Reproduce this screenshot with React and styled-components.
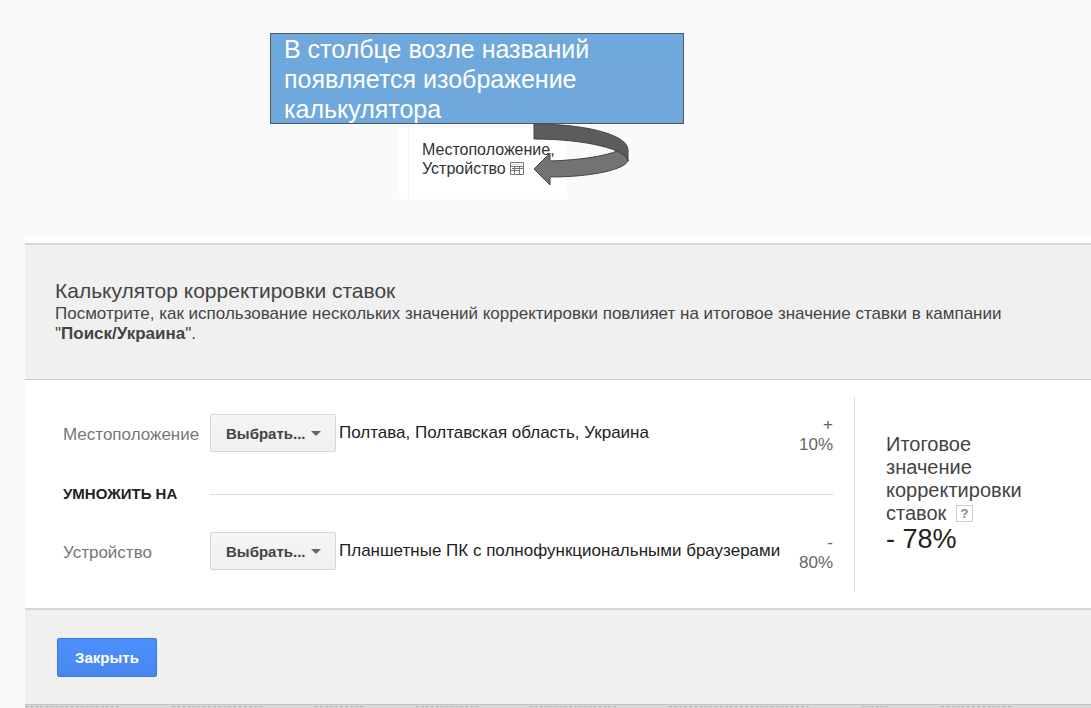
import React from "react";
import styled, { createGlobalStyle } from "styled-components";

const GlobalStyle = createGlobalStyle`
  *, *::before, *::after { box-sizing: border-box; }
  body {
    margin: 0;
    background: #fafafa;
    color: #444;
    font-family: "Liberation Sans", Arial, sans-serif;
    font-size: 17px;
    line-height: 20px;
  }
  h1, h2, p { margin: 0; font-weight: 400; }
`;

const Page = styled.div`
  min-height: 100vh;
  display: flex;
  flex-direction: column;
  overflow: hidden;
`;

const Intro = styled.header`
  display: flex;
  flex-direction: column;
  align-items: flex-start;
  padding: 33px 0 36px 270px;
`;

const Callout = styled.h1`
  width: 414px;
  max-width: 100%;
  height: 91px;
  padding: 0 13px;
  border: 1px solid #505a64;
  background: #6fa8dc;
  color: #fff;
  font-size: 25px;
  line-height: 30px;
`;

const Sample = styled.div`
  position: relative;
  margin: 4px 0 0 129px;
  width: 168px;
  padding-left: 9px;
  background: #fff;
`;

const SampleCell = styled.p`
  height: 71px;
  padding: 12px 0 0 13px;
  border-left: 1px solid #f2f2f2;
  color: #333;
  font-size: 16px;
  line-height: 19px;
  white-space: nowrap;
  svg { vertical-align: -1px; }
`;

const Arrow = styled.svg`
  position: absolute;
  top: -5px;
  left: 134px;
`;

const Panel = styled.main`
  flex: 1;
  display: flex;
  flex-direction: column;
  margin-left: 25px;
  border-top: 8px solid #fdfdfd;
  background: #f0f0f0;
`;

const PanelHead = styled.section`
  padding: 33px 30px 35px;
  border-top: 2px solid #d6d6d6;
  border-bottom: 1px solid #ccc;
  h2 { font-size: 21px; line-height: 26px; }
`;

const PanelBody = styled.section`
  display: flex;
  padding: 17px 0 16px 38px;
  background: #fff;
`;

const Factors = styled.div`
  flex: 0 1 792px;
  display: flex;
  flex-direction: column;
  gap: 28px;
  padding: 17px 21px 22px 0;
  border-right: 1px solid #d9d9d9;
`;

const Row = styled.div`
  display: grid;
  grid-template-columns: 147px 126px minmax(0, 1fr) auto;
  grid-template-rows: 38px;
  align-items: center;
`;

const Label = styled.label`
  padding-top: 4px;
  color: #777;
`;

const Picker = styled.span`
  position: relative;
  display: block;
  svg { position: absolute; right: 15px; top: 17px; pointer-events: none; }
`;

const Select = styled.select`
  appearance: none;
  display: block;
  width: 100%;
  height: 38px;
  padding: 0 15px;
  border: 1px solid #d6d6d6;
  border-radius: 2px;
  background: linear-gradient(#f5f5f5, #f0f0f0);
  color: #444;
  font: bold 15px "Liberation Sans", Arial, sans-serif;
`;

const Value = styled.span`
  padding-left: 3px;
  color: #222;
  white-space: nowrap;
`;

const Percent = styled.span`
  padding-top: 4px;
  color: #666;
  text-align: right;
`;

const Multiply = styled.div`
  display: grid;
  grid-template-columns: 147px 1fr;
  align-items: center;
  height: 24px;
  padding-top: 4px;
  color: #222;
  font-size: 15px;
  font-weight: 700;
  &::after { content: ""; border-top: 1px solid #d9d9d9; }
`;

const Result = styled.div`
  flex: 1;
  padding: 36px 30px 0 31px;
  font-size: 20px;
  line-height: 23px;
  p { width: 140px; }
`;

const Total = styled.output`
  display: block;
  color: #222;
  font-size: 27px;
  line-height: 28px;
`;

const Help = styled.button`
  width: 17px;
  height: 17px;
  margin-left: 4px;
  padding: 0;
  border: 1px solid #ccc;
  background: #fff;
  color: #888;
  font: bold 13px/15px "Liberation Sans", Arial, sans-serif;
  vertical-align: 2px;
`;

const PanelFoot = styled.section`
  flex: 1;
  padding: 28px 32px 27px;
  border-top: 2px solid #d6d6d6;
`;

const Close = styled.button`
  display: block;
  width: 100px;
  height: 39px;
  border: 1px solid #3b78e0;
  border-radius: 2px;
  background: linear-gradient(#4d90fe, #4787ed);
  color: #fff;
  font: bold 15px "Liberation Sans", Arial, sans-serif;
`;

const CutRow = styled.div`
  display: flex;
  justify-content: space-between;
  height: 4px;
  padding: 1px 80px 0 0;
  border-top: 1px solid #c4c4c4;
  background: #d9d9d9;
`;

const CutCell = styled.span`
  width: ${(p) => p.$width}px;
  border-top: 1px dashed #b4b4b4;
`;

const Caret = () => (
  <svg width="10" height="5" viewBox="0 0 10 5" aria-hidden="true">
    <path d="M0 0h10L5 5z" fill="#666" />
  </svg>
);

const CalculatorIcon = () => (
  <svg width="14" height="13" viewBox="0 0 14 13" aria-hidden="true">
    <path
      d="M.5.5h13v12H.5zM.5 4.500h13M.5 8.500h9M4.500 4.500v8M9.500 4.500v8M2 6.500h11M2 2.500h10"
      fill="none"
      stroke="#777"
    />
    <path d="M2 2h10v1H2z" fill="#ddd" />
  </svg>
);

const factors = [
  { id: "place", label: "Местоположение", value: "Полтава, Полтавская область, Украина", sign: "+", amount: "10%" },
  { id: "device", label: "Устройство", value: "Планшетные ПК с полнофункциональными браузерами", sign: "-", amount: "80%" },
];

const Factor = ({ id, label, value, sign, amount }) => (
  <Row>
    <Label htmlFor={id}>{label}</Label>
    <Picker>
      <Select id={id}>
        <option>Выбрать...</option>
      </Select>
      <Caret />
    </Picker>
    <Value>{value}</Value>
    <Percent>
      {sign}
      <br />
      {amount}
    </Percent>
  </Row>
);

export default function App() {
  return (
    <Page>
      <GlobalStyle />
      <Intro>
        <Callout>В столбце возле названий появляется изображение калькулятора</Callout>
        <Sample>
          <SampleCell>
            Местоположение,
            <br />
            Устройство <CalculatorIcon />
          </SampleCell>
          <Arrow width="98" height="64" viewBox="0 0 98 64" aria-hidden="true">
            <path d="M1 46 17 30v8C50 37 77 32 86 27L95 37C94 46 60 54 17 54v8z" fill="#737373" stroke="#444" />
            <path d="M1 1C54 1 95 12 95 27V38C95 27 54 16 1 16z" fill="#5c5c5c" stroke="#444" />
          </Arrow>
        </Sample>
      </Intro>
      <Panel>
        <PanelHead>
          <h2>Калькулятор корректировки ставок</h2>
          <p>
            Посмотрите, как использование нескольких значений корректировки повлияет на итоговое значение ставки в
            кампании "<b>Поиск/Украина</b>".
          </p>
        </PanelHead>
        <PanelBody>
          <Factors>
            <Factor {...factors[0]} />
            <Multiply>УМНОЖИТЬ НА</Multiply>
            <Factor {...factors[1]} />
          </Factors>
          <Result>
            <p>
              Итоговое значение корректировки ставок <Help aria-label="Справка">?</Help>
            </p>
            <Total>- 78%</Total>
          </Result>
        </PanelBody>
        <PanelFoot>
          <Close>Закрыть</Close>
        </PanelFoot>
        <CutRow aria-hidden="true">
          {[94, 90, 48, 62, 86, 140, 26, 70].map((width, i) => (
            <CutCell key={i} $width={width} />
          ))}
        </CutRow>
      </Panel>
    </Page>
  );
}
